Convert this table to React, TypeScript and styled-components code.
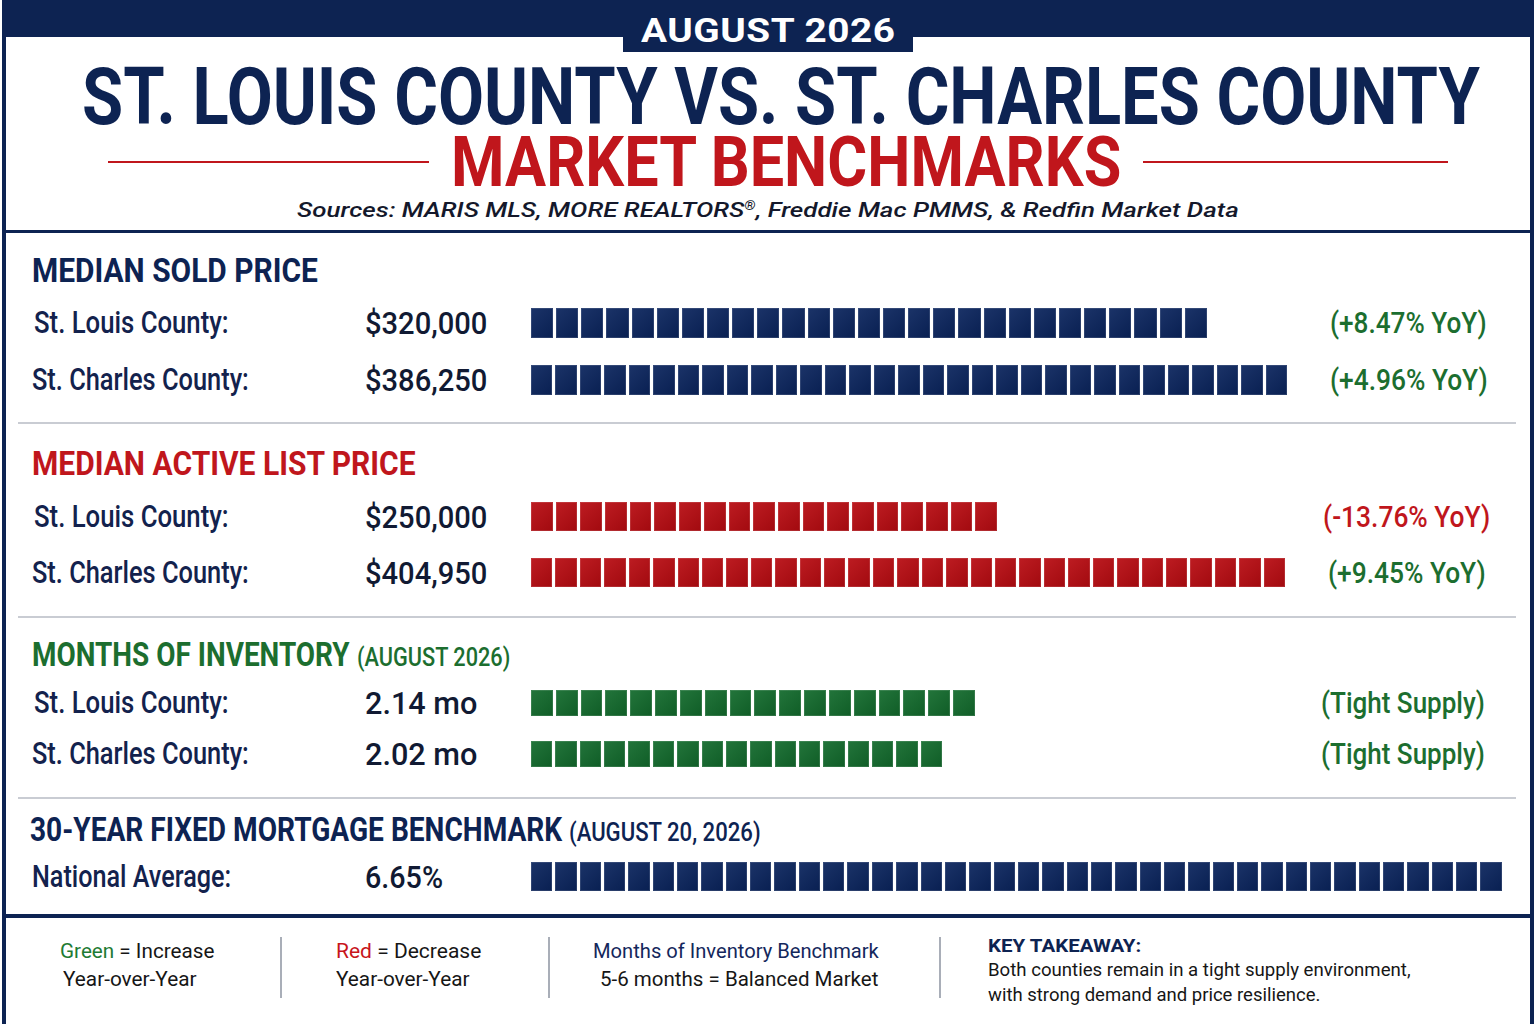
import React, { useLayoutEffect, useRef, useState } from "react";
import styled, { createGlobalStyle } from "styled-components";

const NAVY = "#0d2352";
const RED = "#c0161c";
const GREEN = "#1c6e2f";

const GlobalStyle = createGlobalStyle`
  html, body { margin: 0; padding: 0; background: #ffffff; }
  body { font-family: Roboto, "Liberation Sans", Arial, sans-serif; }
  * { box-sizing: border-box; }
`;

/* ---------- text fitting (condensed look) ---------- */
const FitBox = styled.span<{ $w: number }>`
  display: inline-block;
  width: ${(p) => p.$w}px;
  white-space: nowrap;
`;
const FitInner = styled.span`
  display: inline-block;
  white-space: nowrap;
  transform-origin: 0 50%;
`;

function Fit({ w, children }: { w: number; children: React.ReactNode }) {
  const ref = useRef<HTMLSpanElement>(null);
  const [s, setS] = useState(1);
  useLayoutEffect(() => {
    const measure = () => {
      const el = ref.current;
      if (el && el.offsetWidth) setS(w / el.offsetWidth);
    };
    measure();
    if (document.fonts && document.fonts.ready) document.fonts.ready.then(measure);
  }, [w]);
  return (
    <FitBox $w={w}>
      <FitInner ref={ref} style={{ transform: `scaleX(${s})` }}>
        {children}
      </FitInner>
    </FitBox>
  );
}

/* ---------- frame ---------- */
const Frame = styled.div`
  margin-left: 2px;
  width: 1532px;
  height: 1024px;
  border-left: 4px solid ${NAVY};
  border-right: 4px solid ${NAVY};
  display: flex;
  flex-direction: column;
  overflow: hidden;
  background: #fff;
`;

/* ---------- header ---------- */
const Header = styled.header`
  display: flex;
  flex-direction: column;
  align-items: center;
  padding-bottom: 8px;
  border-bottom: 3px solid ${NAVY};
`;
const TabRow = styled.div`
  display: flex;
  width: 100%;
  height: 52px;
  align-items: flex-start;
`;
const Band = styled.div`
  flex: 1;
  height: 37px;
  background: ${NAVY};
`;
const Tab = styled.div`
  width: 290px;
  height: 52px;
  background: ${NAVY};
  color: #fff;
  display: flex;
  align-items: center;
  justify-content: center;
  padding-top: 8px;
  font-size: 34px;
  font-weight: 700;
  line-height: 40px;
  letter-spacing: 0.5px;
`;
const Title = styled.h1`
  margin: 10px 0 0 0;
  padding-left: 26px;
  font-size: 80px;
  line-height: 70px;
  font-weight: 700;
  color: ${NAVY};
  text-align: center;
`;
const SubTitleRow = styled.div`
  display: flex;
  align-items: center;
  justify-content: center;
  gap: 22px;
  padding-left: 20px;
  height: 60px;
`;
const RedRule = styled.div<{ $w: number }>`
  width: ${(p) => p.$w}px;
  height: 2.5px;
  background: ${RED};
`;
const SubTitle = styled.h2`
  margin: 0;
  font-size: 70px;
  line-height: 60px;
  font-weight: 700;
  color: ${RED};
`;
const Sources = styled.div`
  margin-top: 6px;
  font-size: 21px;
  line-height: 24px;
  font-style: italic;
  font-weight: 500;
  color: #14182b;
`;
const Reg = styled.span`
  font-size: 12px;
  vertical-align: 7px;
  line-height: 0;
`;

/* ---------- sections ---------- */
const Section = styled.section<{ $pt: number; $pb: number }>`
  display: flex;
  flex-direction: column;
  padding: ${(p) => p.$pt}px 28px ${(p) => p.$pb}px 26px;
`;
const Divider = styled.div`
  height: 2px;
  margin: 0 14px 0 12px;
  background: #c9ccd3;
`;
const Heading = styled.div<{ $c: string; $mb: number; $dx?: number }>`
  display: flex;
  align-items: baseline;
  gap: 7px;
  height: 40px;
  line-height: 40px;
  font-size: 34px;
  font-weight: 700;
  color: ${(p) => p.$c};
  margin-bottom: ${(p) => p.$mb}px;
  margin-left: ${(p) => p.$dx ?? 0}px;
`;
const HeadingNote = styled.span`
  font-size: 25px;
  font-weight: 500;
`;
const Rows = styled.div<{ $gap: number }>`
  display: flex;
  flex-direction: column;
  gap: ${(p) => p.$gap}px;
`;
const Row = styled.div<{ $h: number }>`
  display: flex;
  align-items: center;
  height: ${(p) => p.$h}px;
`;
const Label = styled.div<{ $dx: number }>`
  width: 333px;
  flex: none;
  padding-left: ${(p) => p.$dx}px;
  font-size: 31px;
  line-height: 30px;
  font-weight: 500;
  color: #13224d;
`;
const Value = styled.div`
  width: 166px;
  flex: none;
  font-size: 32px;
  line-height: 30px;
  font-weight: 500;
  color: #111a33;
`;
const Bar = styled.div`
  display: flex;
  gap: 3px;
  height: 100%;
  flex: none;
`;
const Block = styled.div<{ $c: string }>`
  flex: 1;
  height: 100%;
  background-color: ${(p) => p.$c};
  background-image: linear-gradient(135deg, rgba(255, 255, 255, 0.07), rgba(0, 0, 0, 0.12));
  box-shadow: inset 0 0 0 1px rgba(255, 255, 255, 0.12);
`;
const Change = styled.div<{ $c: string; $mr: number }>`
  margin-left: auto;
  margin-right: ${(p) => p.$mr}px;
  font-size: 30px;
  line-height: 30px;
  font-weight: 500;
  color: ${(p) => p.$c};
`;

/* ---------- footer ---------- */
const Footer = styled.footer`
  flex: 1;
  border-top: 4px solid ${NAVY};
  display: flex;
  align-items: flex-start;
  padding-top: 19px;
`;
const FootCol = styled.div<{ $w?: number; $pl: number; $mt?: number }>`
  ${(p) => (p.$w ? `width: ${p.$w}px; flex: none;` : "flex: 1;")}
  padding-left: ${(p) => p.$pl}px;
  margin-top: ${(p) => p.$mt ?? 0}px;
  display: flex;
  flex-direction: column;
`;
const Sep = styled.div`
  width: 2px;
  height: 61px;
  flex: none;
  background: #a9aeb8;
`;
const FootLine = styled.div<{ $indent?: number; $c?: string }>`
  font-size: 20px;
  line-height: 28px;
  padding-left: ${(p) => p.$indent ?? 0}px;
  color: ${(p) => p.$c ?? "#161616"};
`;
const Tint = styled.span<{ $c: string }>`
  color: ${(p) => p.$c};
`;
const KeyTitle = styled.div`
  font-size: 19px;
  line-height: 22px;
  font-weight: 700;
  color: ${NAVY};
`;
const KeyText = styled.div`
  font-size: 18px;
  line-height: 25px;
  color: #161616;
`;

/* ---------- data ---------- */
type RowData = {
  label: string;
  lw: number;
  dx: number;
  value: string;
  vw: number;
  blocks: number;
  bw: number;
  change?: string;
  cw?: number;
  cc?: string;
  mr?: number;
};

const BLUE_BAR = "#0a245d";
const RED_BAR = "#b80b11";
const GREEN_BAR = "#126a2c";

function BarRow({ r, h, color }: { r: RowData; h: number; color: string }) {
  return (
    <Row $h={h}>
      <Label $dx={r.dx}>
        <Fit w={r.lw}>{r.label}</Fit>
      </Label>
      <Value>
        <Fit w={r.vw}>{r.value}</Fit>
      </Value>
      <Bar style={{ width: r.bw }}>
        {Array.from({ length: r.blocks }).map((_, i) => (
          <Block key={i} $c={color} />
        ))}
      </Bar>
      {r.change && (
        <Change $c={r.cc || GREEN} $mr={r.mr ?? 15}>
          <Fit w={r.cw || 157}>{r.change}</Fit>
        </Change>
      )}
    </Row>
  );
}

export default function App() {
  return (
    <>
      <GlobalStyle />
      <Frame>
        <Header>
          <TabRow>
            <Band />
            <Tab>
              <Fit w={255}>AUGUST 2026</Fit>
            </Tab>
            <Band />
          </TabRow>
          <Title>
            <Fit w={1398}>ST. LOUIS COUNTY VS. ST. CHARLES COUNTY</Fit>
          </Title>
          <SubTitleRow>
            <RedRule $w={321} />
            <SubTitle>
              <Fit w={670}>MARKET BENCHMARKS</Fit>
            </SubTitle>
            <RedRule $w={305} />
          </SubTitleRow>
          <Sources>
            <Fit w={942}>
              Sources: MARIS MLS, MORE REALTORS<Reg>®</Reg>, Freddie Mac PMMS, &amp; Redfin Market Data
            </Fit>
          </Sources>
        </Header>

        <Section $pt={17} $pb={27}>
          <Heading $c={NAVY} $mb={18}>
            <Fit w={286}>MEDIAN SOLD PRICE</Fit>
          </Heading>
          <Rows $gap={27}>
            <BarRow
              h={30}
              color={BLUE_BAR}
              r={{ label: "St. Louis County:", lw: 195, dx: 2, value: "$320,000", vw: 122, blocks: 27, bw: 676, change: "(+8.47% YoY)", cw: 157 }}
            />
            <BarRow
              h={30}
              color={BLUE_BAR}
              r={{ label: "St. Charles County:", lw: 217, dx: 0, value: "$386,250", vw: 122, blocks: 31, bw: 756, change: "(+4.96% YoY)", cw: 158, mr: 14 }}
            />
          </Rows>
        </Section>
        <Divider />

        <Section $pt={19} $pb={29}>
          <Heading $c={RED} $mb={19}>
            <Fit w={384}>MEDIAN ACTIVE LIST PRICE</Fit>
          </Heading>
          <Rows $gap={27}>
            <BarRow
              h={29}
              color={RED_BAR}
              r={{ label: "St. Louis County:", lw: 195, dx: 2, value: "$250,000", vw: 122, blocks: 19, bw: 466, change: "(-13.76% YoY)", cw: 167, cc: RED, mr: 12 }}
            />
            <BarRow
              h={29}
              color={RED_BAR}
              r={{ label: "St. Charles County:", lw: 217, dx: 0, value: "$404,950", vw: 122, blocks: 31, bw: 754, change: "(+9.45% YoY)", cw: 158, mr: 16 }}
            />
          </Rows>
        </Section>
        <Divider />

        <Section $pt={16} $pb={30}>
          <Heading $c={GREEN} $mb={16}>
            <Fit w={318}>MONTHS OF INVENTORY</Fit>
            <HeadingNote>
              <Fit w={153}>(AUGUST 2026)</Fit>
            </HeadingNote>
          </Heading>
          <Rows $gap={25}>
            <BarRow
              h={26}
              color={GREEN_BAR}
              r={{ label: "St. Louis County:", lw: 195, dx: 2, value: "2.14 mo", vw: 112, blocks: 18, bw: 444, change: "(Tight Supply)", cw: 164, mr: 17 }}
            />
            <BarRow
              h={26}
              color={GREEN_BAR}
              r={{ label: "St. Charles County:", lw: 217, dx: 0, value: "2.02 mo", vw: 112, blocks: 17, bw: 411, change: "(Tight Supply)", cw: 164, mr: 17 }}
            />
          </Rows>
        </Section>
        <Divider />

        <Section $pt={10} $pb={23}>
          <Heading $c={NAVY} $mb={13} $dx={-2}>
            <Fit w={532}>30-YEAR FIXED MORTGAGE BENCHMARK</Fit>
            <HeadingNote>
              <Fit w={192}>(AUGUST 20, 2026)</Fit>
            </HeadingNote>
          </Heading>
          <Rows $gap={0}>
            <BarRow
              h={29}
              color={BLUE_BAR}
              r={{ label: "National Average:", lw: 199, dx: 0, value: "6.65%", vw: 78, blocks: 40, bw: 971 }}
            />
          </Rows>
        </Section>

        <Footer>
          <FootCol $w={274} $pl={54}>
            <FootLine>
              <Fit w={154}>
                <Tint $c="#1e7b34">Green</Tint> = Increase
              </Fit>
            </FootLine>
            <FootLine $indent={3}>
              <Fit w={134}>Year-over-Year</Fit>
            </FootLine>
          </FootCol>
          <Sep />
          <FootCol $w={266} $pl={54}>
            <FootLine>
              <Fit w={145}>
                <Tint $c="#c8151b">Red</Tint> = Decrease
              </Fit>
            </FootLine>
            <FootLine>
              <Fit w={134}>Year-over-Year</Fit>
            </FootLine>
          </FootCol>
          <Sep />
          <FootCol $w={389} $pl={43}>
            <FootLine $c="#14275c">
              <Fit w={286}>Months of Inventory Benchmark</Fit>
            </FootLine>
            <FootLine $indent={7}>
              <Fit w={278}>5-6 months = Balanced Market</Fit>
            </FootLine>
          </FootCol>
          <Sep />
          <FootCol $pl={47} $mt={-2}>
            <KeyTitle>
              <Fit w={153}>KEY TAKEAWAY:</Fit>
            </KeyTitle>
            <KeyText>
              <Fit w={423}>Both counties remain in a tight supply environment,</Fit>
            </KeyText>
            <KeyText>
              <Fit w={332}>with strong demand and price resilience.</Fit>
            </KeyText>
          </FootCol>
        </Footer>
      </Frame>
    </>
  );
}
